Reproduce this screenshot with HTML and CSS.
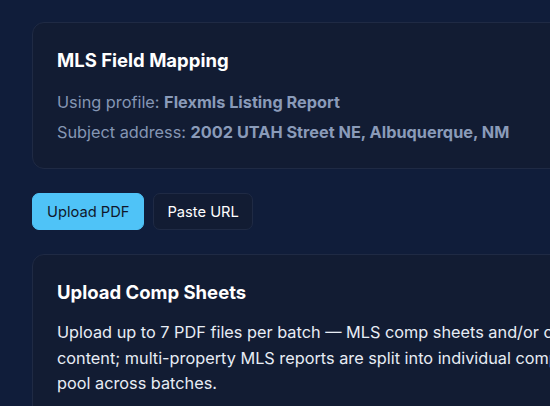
FILE: index.html
```html
<!DOCTYPE html>
<html lang="en">
<head>
<meta charset="utf-8">
<title>MLS Field Mapping</title>
<link rel="stylesheet" href="styles.css">
</head>
<body>
<main class="page">
  <section class="card">
    <h2 class="card-title">MLS Field Mapping</h2>
    <p class="meta">Using profile: <strong>Flexmls Listing Report</strong></p>
    <p class="meta">Subject address: <strong>2002 UTAH Street NE, Albuquerque, NM</strong></p>
  </section>
  <div class="tabs">
    <button class="tab tab-active">Upload PDF</button>
    <button class="tab">Paste URL</button>
  </div>
  <section class="card">
    <h2 class="card-title">Upload Comp Sheets</h2>
    <p class="desc">Upload up to 7 PDF files per batch — MLS comp sheets and/or comparable listing content; multi-property MLS reports are split into individual comps and added to the pool across batches.</p>
  </section>
</main>
</body>
</html>
```
FILE: styles.css
```css
html, body {
  margin: 0;
  padding: 0;
  background: #101d3a;
  overflow: hidden;
}
body {
  font-family: Inter, "Noto Sans", sans-serif;
  color: #e2e8f0;
}
.page {
  width: 707px;
  padding: 22px 0 0 32px;
  display: flex;
  flex-direction: column;
  gap: 24px;
}
.card {
  background: #121c33;
  border: 1px solid #1f2a44;
  border-radius: 12px;
  padding: 24px;
}
.card-title {
  margin: 0;
  font-size: 18.5px;
  line-height: 27px;
  font-weight: 700;
  color: #ffffff;
}
.meta {
  margin: 6px 0 0;
  font-size: 16.3px;
  line-height: 24px;
  color: #8596b4;
}
.card-title + .meta {
  margin-top: 16px;
}
.meta strong {
  font-weight: 700;
  color: #8a9bb9;
}
.tabs {
  display: flex;
  gap: 9px;
}
.tab {
  font-family: Inter, "Noto Sans", sans-serif;
  font-size: 14.7px;
  height: 37px;
  padding: 0 14px;
  border-radius: 7px;
  border: 1px solid #1f2a44;
  background: #121c33;
  color: #ffffff;
}
.tab-active {
  background: #4fc3f7;
  border-color: #4fc3f7;
  color: #0f172a;
}
.tab + .tab {
  padding: 0 13px;
}
.desc {
  margin: 14px 0 0;
  font-size: 16.3px;
  line-height: 25.5px;
  color: #e8edf5;
}
```
